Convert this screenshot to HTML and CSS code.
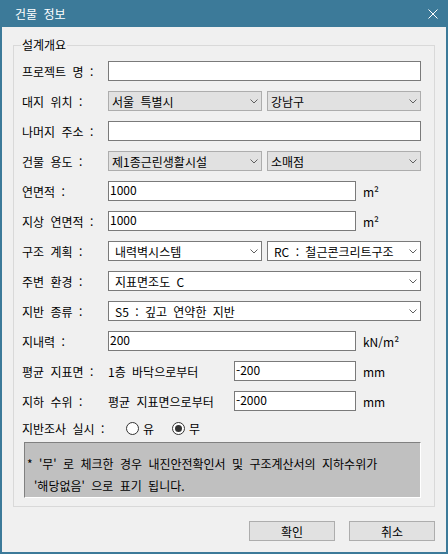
FILE: index.html
```html
<!DOCTYPE html>
<html lang="ko">
<head>
    <meta charset="UTF-8">
    <title>건물 정보</title>
    <link rel="stylesheet" href="styles.css">
</head>
<body>
    <div class="window">
        <div class="titlebar">
            <span class="title">건물 정보</span>
            <svg class="close" width="10" height="10" viewBox="0 0 10 10">
                <path d="M0.5 0.5L9.5 9.5M9.5 0.5L0.5 9.5" stroke="#fff" stroke-width="1" fill="none"/>
            </svg>
        </div>

        <div class="content">
            <fieldset class="group">
                <legend>설계개요</legend>

                <div class="rows">
                    <div class="row">
                        <span class="lbl">프로젝트 명 :</span>
                        <input class="edit wide" type="text" value="">
                    </div>
                    <div class="row">
                        <span class="lbl">대지 위치 :</span>
                        <div class="combo"><span>서울 특별시</span><svg class="chev" width="8" height="5" viewBox="0 0 8 5"><path d="M0.5 0.5L4 4L7.5 0.5" stroke="#606060" fill="none"/></svg></div>
                        <div class="combo"><span>강남구</span><svg class="chev" width="8" height="5" viewBox="0 0 8 5"><path d="M0.5 0.5L4 4L7.5 0.5" stroke="#606060" fill="none"/></svg></div>
                    </div>
                    <div class="row">
                        <span class="lbl">나머지 주소 :</span>
                        <input class="edit wide" type="text" value="">
                    </div>
                    <div class="row">
                        <span class="lbl">건물 용도 :</span>
                        <div class="combo"><span>제1종근린생활시설</span><svg class="chev" width="8" height="5" viewBox="0 0 8 5"><path d="M0.5 0.5L4 4L7.5 0.5" stroke="#606060" fill="none"/></svg></div>
                        <div class="combo"><span>소매점</span><svg class="chev" width="8" height="5" viewBox="0 0 8 5"><path d="M0.5 0.5L4 4L7.5 0.5" stroke="#606060" fill="none"/></svg></div>
                    </div>
                    <div class="row">
                        <span class="lbl">연면적 :</span>
                        <input class="edit num" type="text" value="1000">
                        <span class="unit">m²</span>
                    </div>
                    <div class="row">
                        <span class="lbl">지상 연면적 :</span>
                        <input class="edit num" type="text" value="1000">
                        <span class="unit">m²</span>
                    </div>
                    <div class="row">
                        <span class="lbl">구조 계획 :</span>
                        <div class="combo editable"><span>내력벽시스템</span><svg class="chev" width="8" height="5" viewBox="0 0 8 5"><path d="M0.5 0.5L4 4L7.5 0.5" stroke="#606060" fill="none"/></svg></div>
                        <div class="combo editable"><span>RC : 철근콘크리트구조</span><svg class="chev" width="8" height="5" viewBox="0 0 8 5"><path d="M0.5 0.5L4 4L7.5 0.5" stroke="#606060" fill="none"/></svg></div>
                    </div>
                    <div class="row">
                        <span class="lbl">주변 환경 :</span>
                        <div class="combo editable full"><span>지표면조도 C</span><svg class="chev" width="8" height="5" viewBox="0 0 8 5"><path d="M0.5 0.5L4 4L7.5 0.5" stroke="#606060" fill="none"/></svg></div>
                    </div>
                    <div class="row">
                        <span class="lbl">지반 종류 :</span>
                        <div class="combo editable full"><span>S5 : 깊고 연약한 지반</span><svg class="chev" width="8" height="5" viewBox="0 0 8 5"><path d="M0.5 0.5L4 4L7.5 0.5" stroke="#606060" fill="none"/></svg></div>
                    </div>
                    <div class="row">
                        <span class="lbl">지내력 :</span>
                        <input class="edit num" type="text" value="200">
                        <span class="unit">kN/m²</span>
                    </div>
                    <div class="row">
                        <span class="lbl">평균 지표면 :</span>
                        <span class="from">1층 바닥으로부터</span>
                        <input class="edit short" type="text" value="-200">
                        <span class="unit">mm</span>
                    </div>
                    <div class="row">
                        <span class="lbl">지하 수위 :</span>
                        <span class="from">평균 지표면으로부터</span>
                        <input class="edit short" type="text" value="-2000">
                        <span class="unit">mm</span>
                    </div>
                </div>

                <div class="row radio-row">
                    <span class="lbl">지반조사 실시 :</span>
                    <span class="radio"><span class="dot"></span>유</span>
                    <span class="radio checked"><span class="dot"></span>무</span>
                </div>

                <div class="note">
                    <div>* '무' 로 체크한 경우 내진안전확인서 및 구조계산서의 지하수위가</div>
                    <div class="indent">'해당없음' 으로 표기 됩니다.</div>
                </div>
            </fieldset>

            <div class="buttons">
                <button type="button">확인</button>
                <button type="button">취소</button>
            </div>
        </div>
    </div>
</body>
</html>
```

FILE: styles.css
```css
* {
    box-sizing: border-box;
}

body {
    margin: 0;
    font-family: "Noto Sans CJK KR", "Noto Sans", sans-serif;
    font-size: 12px;
    word-spacing: 3px;
    color: #000;
}

.window {
    width: 448px;
    height: 554px;
    display: flex;
    flex-direction: column;
    background: #3c7a99;
    padding: 0 2px 2px;
    overflow: hidden;
}

.titlebar {
    height: 27px;
    flex: none;
    display: flex;
    align-items: center;
    justify-content: space-between;
    padding: 0 8px 0 13px;
    color: #fff;
    font-size: 12px;
}

.content {
    flex: 1;
    background: #f0f0f0;
    padding: 11px 11px 0;
}

.group {
    margin: 0;
    border: 1px solid #d9d9d9;
    padding: 9px 13px 8px 8px;
    min-width: 0;
}

.group legend {
    padding: 0 1px;
    margin-left: -1px;
    line-height: 14px;
}

.rows {
    display: flex;
    flex-direction: column;
    gap: 10px;
}

.row {
    display: flex;
    align-items: center;
    height: 20px;
}

.lbl {
    width: 86px;
    flex: none;
    white-space: nowrap;
}

.edit {
    height: 20px;
    margin: 0;
    border: 1px solid #7a7a7a;
    background: #fff;
    font: inherit;
    padding: 0 0 4px 1px;
    outline: none;
}

.edit.wide {
    width: 313px;
}

.edit.num {
    width: 248px;
}

.edit.short {
    width: 122px;
}

.unit {
    margin-left: 7px;
}

.from {
    width: 126px;
    flex: none;
    white-space: nowrap;
}

.combo {
    width: 154px;
    height: 20px;
    display: flex;
    align-items: center;
    border: 1px solid #adadad;
    background: #e1e1e1;
    padding: 0 3px;
    white-space: nowrap;
}

.combo + .combo {
    margin-left: 5px;
}

.combo.editable {
    background: #fff;
    border-color: #7a7a7a;
    padding-left: 6px;
}

.combo.full {
    width: 313px;
}

.chev {
    margin-left: auto;
    flex: none;
}

.radio-row {
    margin-top: 7px;
}

.radio {
    display: flex;
    align-items: center;
    gap: 4px;
    margin-left: 18px;
}

.radio:first-of-type {
    margin-left: 19px;
}

.dot {
    width: 13px;
    height: 13px;
    border: 1px solid #333;
    border-radius: 50%;
    background: #fff;
    display: flex;
    align-items: center;
    justify-content: center;
}

.radio.checked .dot::after {
    content: "";
    width: 7px;
    height: 7px;
    border-radius: 50%;
    background: #333;
}

.note {
    margin: 4px 0 0 2px;
    height: 56px;
    background: #c0c0c0;
    border-top: 1px solid #808080;
    border-left: 1px solid #808080;
    border-bottom: 1px solid #fff;
    border-right: 1px solid #fff;
    padding: 10px 0 0 2px;
    line-height: 22px;
    white-space: nowrap;
}

.note .indent {
    padding-left: 7px;
}

.buttons {
    display: flex;
    justify-content: flex-end;
    gap: 14px;
    margin-top: 14px;
}

.buttons button {
    width: 86px;
    height: 20px;
    margin: 0;
    padding: 0;
    border: 1px solid #adadad;
    background: #e1e1e1;
    font: inherit;
    color: #000;
}
```
